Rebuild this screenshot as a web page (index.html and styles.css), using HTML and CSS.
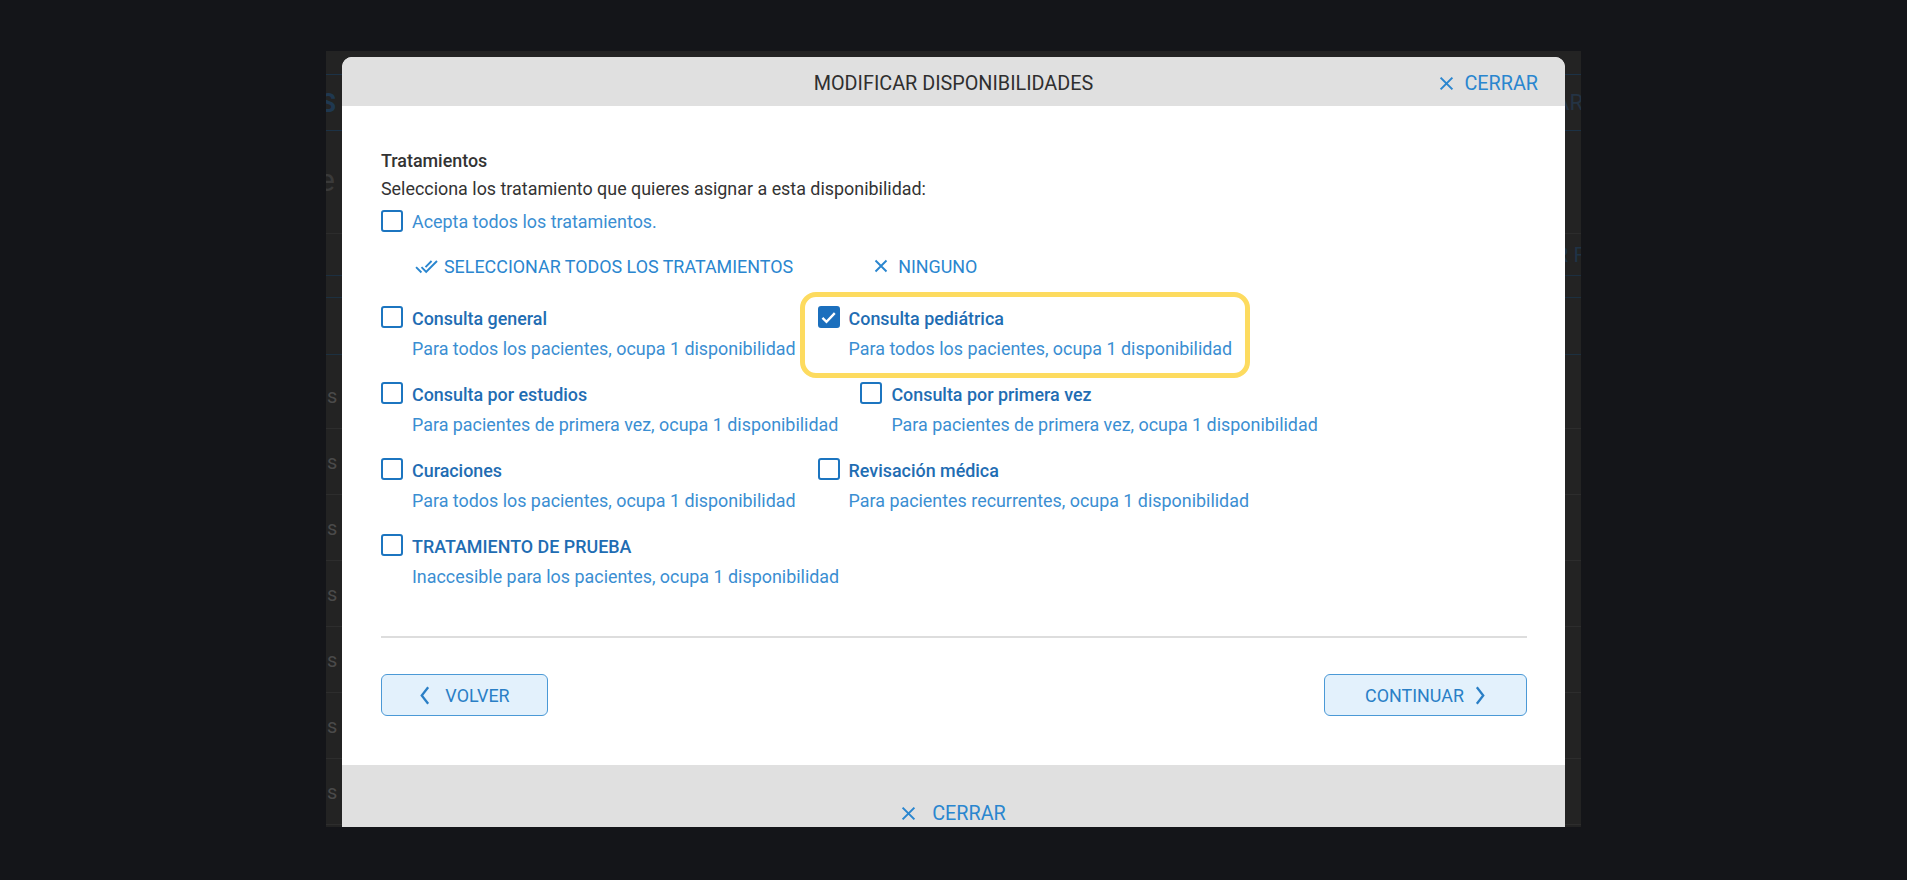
FILE: index.html
```html
<!DOCTYPE html>
<html lang="es">
<head>
<meta charset="utf-8">
<title>Modificar disponibilidades</title>
<link rel="stylesheet" href="styles.css">
</head>
<body>
<div class="viewport">
  <div class="app">
    <div class="app-top"></div>
    <div class="app-bar"><span class="app-logo">S</span><span class="app-bar-right">AR</span></div>
    <div class="app-heading"><span class="app-h">e</span></div>
    <div class="app-tabs"><span></span><span class="app-tab-right">R F</span></div>
    <div class="app-sub"></div>
    <div class="app-thead"></div>
    <div class="app-row app-row-first"><span class="app-cell">s</span></div>
    <div class="app-row"><span class="app-cell">s</span></div>
    <div class="app-row"><span class="app-cell">s</span></div>
    <div class="app-row"><span class="app-cell">s</span></div>
    <div class="app-row"><span class="app-cell">s</span></div>
    <div class="app-row"><span class="app-cell">s</span></div>
    <div class="app-row"><span class="app-cell">s</span></div>
  </div>

  <div class="modal">
    <div class="modal-header">
      <span></span>
      <div class="modal-title">MODIFICAR DISPONIBILIDADES</div>
      <button class="link-btn header-close" type="button">
        <svg class="x-icon" viewBox="0 0 14 14" width="15" height="15"><path d="M1.5 1.5L12.5 12.5M12.5 1.5L1.5 12.5" stroke="currentColor" stroke-width="1.9" fill="none"/></svg>
        <span>CERRAR</span>
      </button>
    </div>

    <div class="modal-body">
      <div class="section-title">Tratamientos</div>
      <div class="section-sub">Selecciona los tratamiento que quieres asignar a esta disponibilidad:</div>
      <label class="check-row">
        <span class="checkbox"></span>
        <span>Acepta todos los tratamientos.</span>
      </label>

      <div class="bulk">
        <button class="link-btn bulk-btn" type="button">
          <svg viewBox="0 0 24 24" width="23" height="23"><path fill="currentColor" d="M18 7l-1.41-1.41-6.34 6.34 1.41 1.41L18 7zm4.24-1.41L11.66 16.170 7.48 12l-1.41 1.41L11.66 19l12-12-1.42-1.41zM.41 13.41L6 19l1.41-1.41L1.830 12 .41 13.41z"/></svg>
          <span>SELECCIONAR TODOS LOS TRATAMIENTOS</span>
        </button>
        <button class="link-btn bulk-btn bulk-none" type="button">
          <svg class="x-icon" viewBox="0 0 14 14" width="14" height="14"><path d="M1.5 1.5L12.5 12.5M12.5 1.5L1.5 12.5" stroke="currentColor" stroke-width="1.9" fill="none"/></svg>
          <span>NINGUNO</span>
        </button>
      </div>

      <div class="treatments">
        <div class="treat">
          <span class="checkbox"></span>
          <div class="treat-text">
            <div class="treat-title">Consulta general</div>
            <div class="treat-desc">Para todos los pacientes, ocupa 1 disponibilidad</div>
          </div>
        </div>
        <div class="treat highlight">
          <span class="checkbox checked"><svg viewBox="0 0 16 16" width="17" height="17"><path d="M2.3 8.4L6.1 12.1L13.9 3.9" stroke="#fff" stroke-width="2.2" fill="none"/></svg></span>
          <div class="treat-text">
            <div class="treat-title">Consulta pediátrica</div>
            <div class="treat-desc">Para todos los pacientes, ocupa 1 disponibilidad</div>
          </div>
        </div>
        <div class="treat">
          <span class="checkbox"></span>
          <div class="treat-text">
            <div class="treat-title">Consulta por estudios</div>
            <div class="treat-desc">Para pacientes de primera vez, ocupa 1 disponibilidad</div>
          </div>
        </div>
        <div class="treat">
          <span class="checkbox"></span>
          <div class="treat-text">
            <div class="treat-title">Consulta por primera vez</div>
            <div class="treat-desc">Para pacientes de primera vez, ocupa 1 disponibilidad</div>
          </div>
        </div>
        <div class="treat">
          <span class="checkbox"></span>
          <div class="treat-text">
            <div class="treat-title">Curaciones</div>
            <div class="treat-desc">Para todos los pacientes, ocupa 1 disponibilidad</div>
          </div>
        </div>
        <div class="treat">
          <span class="checkbox"></span>
          <div class="treat-text">
            <div class="treat-title">Revisación médica</div>
            <div class="treat-desc">Para pacientes recurrentes, ocupa 1 disponibilidad</div>
          </div>
        </div>
        <div class="treat">
          <span class="checkbox"></span>
          <div class="treat-text">
            <div class="treat-title">TRATAMIENTO DE PRUEBA</div>
            <div class="treat-desc">Inaccesible para los pacientes, ocupa 1 disponibilidad</div>
          </div>
        </div>
      </div>

      <div class="divider"></div>

      <div class="actions">
        <button class="btn btn-back" type="button">
          <svg viewBox="0 0 12 22" width="11" height="21"><path d="M10 2L3 11L10 20" stroke="currentColor" stroke-width="2.5" fill="none"/></svg>
          <span>VOLVER</span>
        </button>
        <button class="btn btn-next" type="button">
          <span>CONTINUAR</span>
          <svg viewBox="0 0 12 22" width="11" height="21"><path d="M2 2L9 11L2 20" stroke="currentColor" stroke-width="2.5" fill="none"/></svg>
        </button>
      </div>
    </div>

    <div class="modal-footer">
      <button class="link-btn footer-close" type="button">
        <svg class="x-icon" viewBox="0 0 14 14" width="15" height="15"><path d="M1.5 1.5L12.5 12.5M12.5 1.5L1.5 12.5" stroke="currentColor" stroke-width="1.9" fill="none"/></svg>
        <span>CERRAR</span>
      </button>
    </div>
  </div>
</div>
</body>
</html>
```

FILE: styles.css
```css
* { box-sizing: border-box; }

html, body {
  margin: 0;
  height: 100%;
}

body {
  background: #141519;
  font-family: Roboto, "Liberation Sans", sans-serif;
  padding: 51px 0 0 326px;
  overflow: hidden;
}

/* dimmed page behind the dialog */
.viewport {
  position: relative;
  width: 1255px;
  height: 776px;
  overflow: hidden;
  background: #232323;
}

.app {
  color: #3a3b3d;
  font-size: 20px;
}

.app-top {
  height: 24px;
  border-bottom: 1px solid #1c3246;
}

.app-bar {
  height: 56px;
  border-bottom: 1px solid #1c3246;
  display: flex;
  align-items: center;
  justify-content: space-between;
}

.app-logo {
  color: #1f3850;
  font-weight: 700;
  font-size: 26px;
  margin-left: -6px;
}

.app-bar-right {
  color: #243344;
  font-size: 22px;
  margin-right: -2px;
}

.app-heading {
  height: 103px;
  border-bottom: 1px solid #2c2c2c;
  padding-top: 30px;
}

.app-h {
  font-size: 32px;
  color: #3a3a3a;
  margin-left: -8px;
}

.app-tabs {
  height: 42px;
  border-bottom: 1px solid #1c2f40;
  display: flex;
  align-items: center;
  justify-content: space-between;
}

.app-tab-right {
  color: #1f3346;
  font-size: 21px;
  margin-right: -4px;
}

.app-sub {
  height: 22px;
  border-bottom: 1px solid #1c3040;
}

.app-thead {
  height: 57px;
  border-bottom: 1px solid #1c3040;
}

.app-row {
  height: 66px;
  border-bottom: 1px solid #2d2d2d;
  display: flex;
  align-items: center;
}

.app-row-first {
  height: 74px;
  padding-top: 8px;
}

.app-cell {
  font-size: 20px;
  color: #4a4a4a;
  margin-left: 1px;
}

/* dialog */
.modal {
  position: absolute;
  left: 16px;
  top: 6px;
  width: 1223px;
  background: #fff;
  border-radius: 10px 10px 0 0;
}

.modal-header {
  height: 49px;
  background: #e0e0e0;
  border-radius: 10px 10px 0 0;
  display: grid;
  grid-template-columns: 1fr auto 1fr;
  align-items: center;
  padding: 3px 27px 0 27px;
}

.modal-title {
  font-size: 19.8px;
  color: #2f2f2f;
}

.link-btn {
  border: 0;
  background: none;
  padding: 0;
  font-family: inherit;
  color: #2a86cf;
  display: flex;
  align-items: center;
  cursor: pointer;
}

.header-close {
  justify-self: end;
  font-size: 19.8px;
  gap: 10px;
}

.modal-body {
  padding: 41px 38px 49px 39px;
}

.section-title {
  font-size: 17.9px;
  font-weight: 500;
  line-height: 28px;
  color: #333;
}

.section-sub {
  font-size: 17.9px;
  line-height: 28px;
  color: #333;
}

.check-row {
  display: flex;
  align-items: center;
  gap: 9px;
  height: 28px;
  margin-top: 4px;
  font-size: 17.9px;
  color: #3a8ed2;
}

.checkbox {
  flex: none;
  width: 22px;
  height: 22px;
  border: 2.5px solid #1c75c0;
  border-radius: 3px;
  background: #fff;
}

.checkbox.checked {
  background: #1b6fbd;
  border-color: #1b6fbd;
  display: flex;
  align-items: center;
  justify-content: center;
}

.bulk {
  display: flex;
  align-items: center;
  height: 28px;
  margin-top: 17px;
  padding-left: 34px;
}

.bulk-btn {
  font-size: 17.9px;
  gap: 6px;
}

.bulk-none {
  margin-left: 81px;
  gap: 10px;
}

.treatments {
  display: flex;
  flex-wrap: wrap;
  column-gap: 22px;
  margin-top: 25px;
}

.treat {
  position: relative;
  display: flex;
  align-items: flex-start;
  gap: 9px;
  margin-bottom: 18px;
}

.treat .checkbox {
  margin-top: 1px;
}

.treat-title {
  font-size: 17.9px;
  font-weight: 500;
  line-height: 28px;
  color: #1f6db3;
}

.treat-desc {
  font-size: 17.9px;
  line-height: 28px;
  margin-top: 2px;
  color: #3a8ed2;
}

.treat.highlight::after {
  content: "";
  position: absolute;
  top: -13px;
  bottom: -15px;
  left: -18px;
  right: -18px;
  border: 5px solid #fddb5f;
  border-radius: 16px;
  pointer-events: none;
}

.divider {
  height: 2px;
  background: #dddddd;
  margin-top: 27px;
}

.actions {
  display: flex;
  justify-content: space-between;
  margin-top: 36px;
}

.btn {
  height: 42px;
  display: flex;
  align-items: center;
  justify-content: center;
  gap: 15px;
  background: #e3f1fc;
  border: 1.5px solid #4b99d6;
  border-radius: 6px;
  color: #2a7fc6;
  font-family: inherit;
  font-size: 17.9px;
  padding: 0;
  cursor: pointer;
}

.btn-back {
  width: 167px;
}

.btn-next {
  width: 203px;
  gap: 11px;
}

.modal-footer {
  height: 80px;
  background: #e0e0e0;
  padding-top: 34px;
  display: flex;
  justify-content: center;
}

.footer-close {
  height: 28px;
  font-size: 19.8px;
  gap: 16px;
}
```
